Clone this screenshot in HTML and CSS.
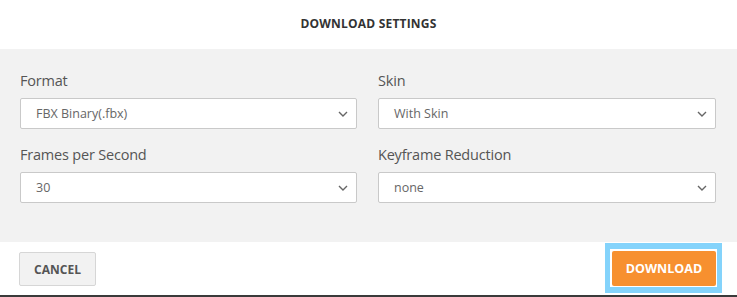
FILE: index.html
```html
<!DOCTYPE html>
<html>
<head>
<meta charset="utf-8">
<link rel="stylesheet" href="styles.css">
</head>
<body>
<div class="dialog">
  <header class="head">DOWNLOAD SETTINGS</header>
  <section class="form">
    <div class="field">
      <label class="label">Format</label>
      <div class="select"><span>FBX Binary(.fbx)</span><svg class="chev" width="10" height="6" viewBox="0 0 10 6"><path d="M1 1l4 4 4-4" fill="none" stroke="#666" stroke-width="1.4"/></svg></div>
    </div>
    <div class="field">
      <label class="label">Skin</label>
      <div class="select"><span>With Skin</span><svg class="chev" width="10" height="6" viewBox="0 0 10 6"><path d="M1 1l4 4 4-4" fill="none" stroke="#666" stroke-width="1.4"/></svg></div>
    </div>
    <div class="field">
      <label class="label">Frames per Second</label>
      <div class="select"><span>30</span><svg class="chev" width="10" height="6" viewBox="0 0 10 6"><path d="M1 1l4 4 4-4" fill="none" stroke="#666" stroke-width="1.4"/></svg></div>
    </div>
    <div class="field">
      <label class="label">Keyframe Reduction</label>
      <div class="select"><span>none</span><svg class="chev" width="10" height="6" viewBox="0 0 10 6"><path d="M1 1l4 4 4-4" fill="none" stroke="#666" stroke-width="1.4"/></svg></div>
    </div>
  </section>
  <footer class="foot">
    <button class="btn cancel">CANCEL</button>
    <span class="focus-ring"><button class="btn download">DOWNLOAD</button></span>
  </footer>
  <div class="edge"></div>
</div>
</body>
</html>
```
FILE: styles.css
```css
html, body {
  margin: 0;
  padding: 0;
  background: #fff;
}
.dialog {
  width: 737px;
  height: 297px;
  overflow: hidden;
  font-family: "Open Sans", "Noto Sans", sans-serif;
  display: flex;
  flex-direction: column;
}
.head {
  height: 49px;
  display: flex;
  align-items: center;
  justify-content: center;
  font-size: 12px;
  font-weight: 700;
  color: #333;
  letter-spacing: 0.2px;
  padding-bottom: 3px;
  box-sizing: border-box;
}
.form {
  height: 193px;
  background: #f2f2f2;
  box-sizing: border-box;
  padding: 22px 21px 0 20px;
  display: grid;
  grid-template-columns: 337px 338px;
  column-gap: 21px;
  row-gap: 16px;
  align-content: start;
}
.field {
  display: flex;
  flex-direction: column;
}
.label {
  font-size: 14.5px;
  color: #555;
  line-height: 20px;
  height: 20px;
  margin-bottom: 7px;
  letter-spacing: -0.2px;
}
.select {
  height: 31px;
  box-sizing: border-box;
  background: #fff;
  border: 1px solid #c9c9c9;
  border-radius: 2px;
  display: flex;
  align-items: center;
  justify-content: space-between;
  padding: 0 8px 0 15px;
  font-size: 12.5px;
  color: #666;
}
.chev {
  display: block;
}
.foot {
  height: 53px;
  box-sizing: border-box;
  display: flex;
  justify-content: space-between;
  align-items: flex-start;
  padding: 10px 15px 0 19px;
}
.btn {
  font-family: "Open Sans", "Noto Sans", sans-serif;
  font-weight: 700;
  font-size: 12px;
  height: 34px;
  border-radius: 2px;
  padding: 0;
  cursor: pointer;
}
.cancel {
  width: 77px;
  background: #f2f2f2;
  border: 1px solid #d6d6d6;
  color: #555;
}
.focus-ring {
  display: block;
  margin-top: -9px;
  border-style: solid;
  border-color: #84d3fb;
  border-width: 6px 5px 6px 5px;
  padding: 2px 1px 1px 2px;
  background: #fff;
  width: 104px;
}
.focus-ring .download {
  display: block;
  width: 104px;
  height: 35px;
  font-size: 12.5px;
  background: #f7902f;
  border: none;
  color: #fff;
}
.edge {
  height: 2px;
  background: #3a3a3a;
}
```
